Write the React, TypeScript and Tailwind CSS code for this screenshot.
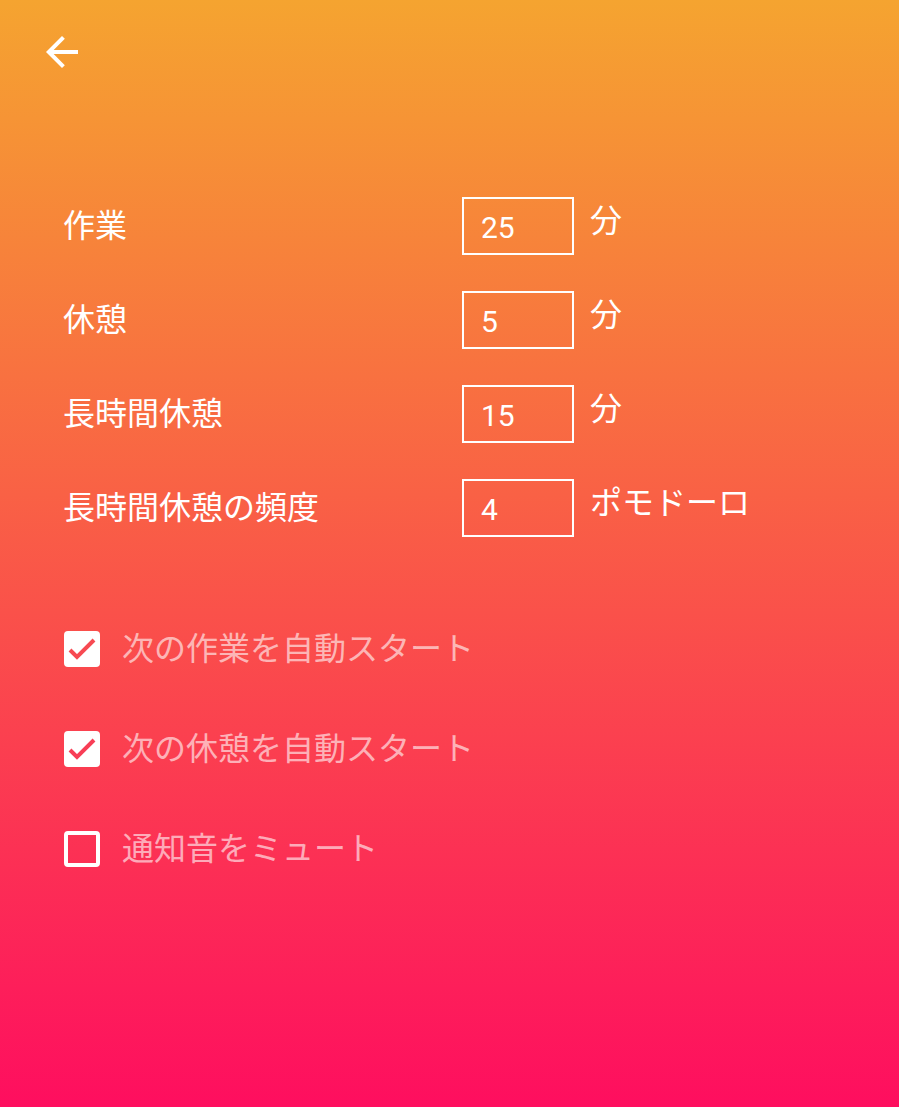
import React from "react";

const rows = [
  { label: "作業", value: "25", unit: "分" },
  { label: "休憩", value: "5", unit: "分" },
  { label: "長時間休憩", value: "15", unit: "分" },
  { label: "長時間休憩の頻度", value: "4", unit: "ポモドーロ" },
];

const checks = [
  { label: "次の作業を自動スタート", checked: true, color: "#f74a52" },
  { label: "次の休憩を自動スタート", checked: true, color: "#f83e56" },
  { label: "通知音をミュート", checked: false, color: "#f9335a" },
];

export default function App() {
  return (
    <div
      className="min-h-[1107px] w-full bg-[linear-gradient(to_bottom,#f5a430,#fe0e5f)] text-white"
      style={{ fontFamily: "Roboto, 'Noto Sans CJK JP', sans-serif" }}
    >
      <div className="pt-[28px] pl-[38px]">
        <svg width="48" height="48" viewBox="0 0 24 24" fill="white">
          <path d="M20 11H7.83l5.59-5.59L12 4l-8 8 8 8 1.41-1.41L7.83 13H20v-2z" />
        </svg>
      </div>

      <div className="mt-[121px] pl-[63px] flex flex-col gap-[36px]">
        {rows.map((r) => (
          <div key={r.label} className="flex items-start h-[58px]">
            <div className="w-[399px] self-center text-[32px] leading-[32px]">{r.label}</div>
            <div className="w-[112px] h-[58px] border-2 border-white flex items-center pl-[17px] pt-[3px] text-[30px] leading-none">
              {r.value}
            </div>
            <div className="ml-[16px] mt-[8px] text-[32px] leading-[32px]">{r.unit}</div>
          </div>
        ))}
      </div>

      <div className="mt-[94px] pl-[64px] flex flex-col gap-[64px]">
        {checks.map((c) => (
          <div key={c.label} className="flex items-center h-[36px]">
            {c.checked ? (
              <div className="w-[36px] h-[36px] rounded-[4px] bg-white flex items-center justify-center">
                <svg width="36" height="36" viewBox="0 0 36 36">
                  <polyline
                    points="6,19 13,26 30,9"
                    fill="none"
                    stroke={c.color}
                    strokeWidth="4"
                  />
                </svg>
              </div>
            ) : (
              <div className="w-[36px] h-[36px] rounded-[4px] border-[4px] border-white" />
            )}
            <div className="ml-[22px] text-[32px] leading-[36px] text-white/60">{c.label}</div>
          </div>
        ))}
      </div>
    </div>
  );
}
